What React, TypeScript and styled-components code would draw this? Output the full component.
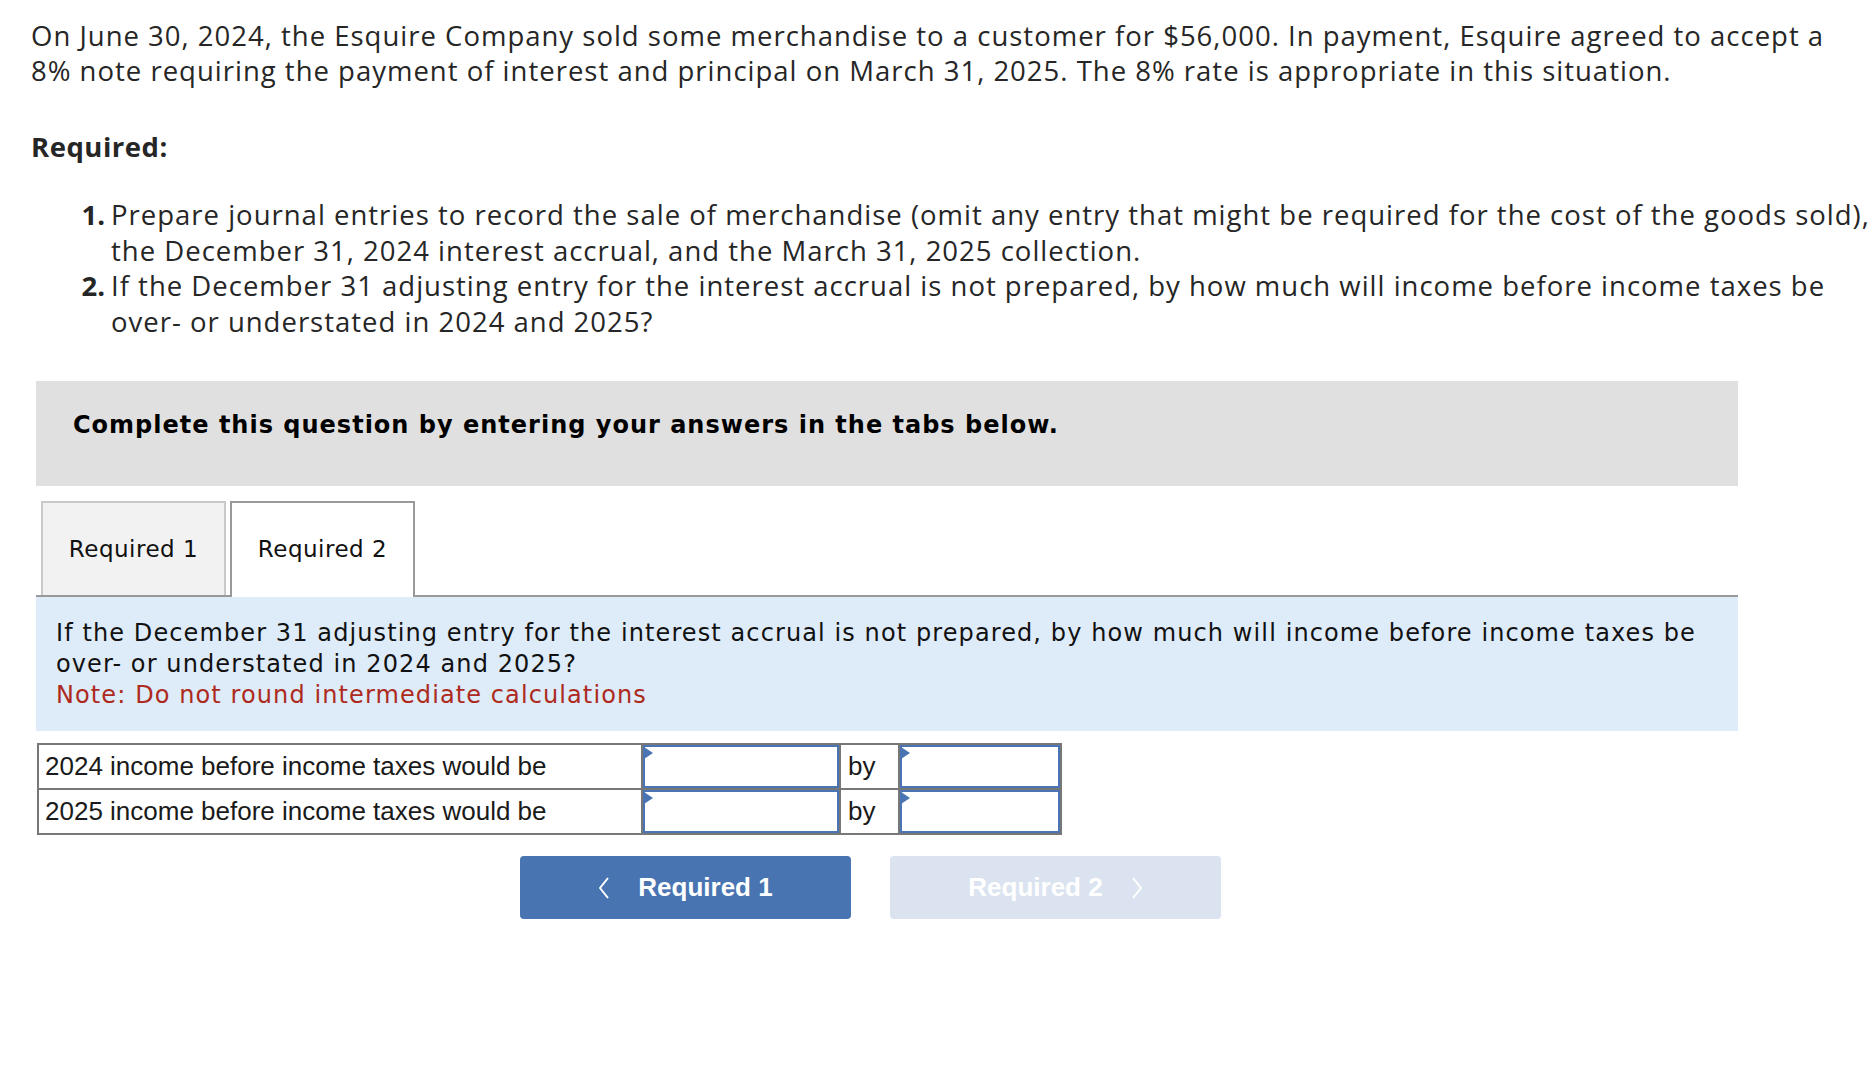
import type { FC } from 'react'
import { createGlobalStyle, styled } from 'styled-components'

const GlobalStyle = createGlobalStyle`
  html, body {
    margin: 0;
    padding: 0;
    background: #fff;
    overflow: hidden;
  }
`

const Page = styled.div`
  padding: 18px 0 40px 31px;
  font-family: 'Open Sans', Lato, sans-serif;
  color: #262626;
`

const Intro = styled.p`
  margin: 0;
  font-size: 27.5px;
  letter-spacing: 1px;
  line-height: 35px;
  white-space: nowrap;
`

const RequiredHeading = styled.h3`
  margin: 41px 0 0;
  font-size: 27.5px;
  letter-spacing: 0.5px;
  line-height: 35px;
  font-weight: 700;
`

const List = styled.ol`
  list-style: none;
  margin: 33px 0 0;
  padding: 0 0 0 40px;
  font-size: 27.5px;
  letter-spacing: 1px;
  line-height: 35.6px;
`

const ListItem = styled.li`
  display: grid;
  grid-template-columns: 34px 1fr;
  column-gap: 6px;
  white-space: nowrap;
`

const Num = styled.span`
  text-align: right;
  font-weight: 700;
  letter-spacing: 0;
`

const Question = styled.section`
  width: 1702px;
  margin: 42px 0 0 5px;
`

const Instructions = styled.div`
  box-sizing: border-box;
  height: 105px;
  padding: 30px 0 0 37px;
  background: #e0e0e0;
  color: #000;
  font-family: Verdana, 'DejaVu Sans', sans-serif;
  font-size: 24px;
  letter-spacing: 1px;
  line-height: 28px;
  font-weight: 700;
`

const TabStrip = styled.div`
  display: flex;
  align-items: flex-end;
  gap: 4px;
  margin-top: 15px;
  padding-left: 5px;
  border-bottom: 2px solid #999;
`

const Tab = styled.div<{ $active?: boolean }>`
  box-sizing: border-box;
  width: 185px;
  height: ${(p) => (p.$active ? 96 : 94)}px;
  margin-bottom: ${(p) => (p.$active ? -2 : 0)}px;
  display: flex;
  align-items: center;
  justify-content: center;
  padding-bottom: ${(p) => (p.$active ? 2 : 0)}px;
  border: 2px solid ${(p) => (p.$active ? '#999' : '#c9c9c9')};
  border-bottom: none;
  background: ${(p) => (p.$active ? '#fff' : '#f2f2f2')};
  color: #111;
  font-family: Verdana, 'DejaVu Sans', sans-serif;
  font-size: 23px;
  letter-spacing: 0.5px;
`

const Panel = styled.div`
  padding: 21px 20px 20px;
  background: #deebf8;
  color: #111;
  font-family: Verdana, 'DejaVu Sans', sans-serif;
  font-size: 24px;
  letter-spacing: 1.1px;
  line-height: 31px;
  white-space: nowrap;
`

const Note = styled.div`
  color: #ad2a21;
`

const AnswerTable = styled.table`
  margin: 12px 0 0 1px;
  border-collapse: collapse;
  border: 2px solid #777;
  font-family: 'Liberation Sans', Arial, sans-serif;
  font-size: 26px;
  color: #1a1a1a;
`

const Cell = styled.td<{ $width: number; $pad: number }>`
  box-sizing: border-box;
  width: ${(p) => p.$width}px;
  height: 43px;
  padding: 0 0 0 ${(p) => p.$pad}px;
  border: 2px solid #777;
  white-space: nowrap;
`

const InputCell = styled.td<{ $width: number }>`
  box-sizing: border-box;
  position: relative;
  width: ${(p) => p.$width}px;
  height: 43px;
  padding: 0;
  border: 2px solid #777;
`

const AmountInput = styled.input`
  display: block;
  box-sizing: border-box;
  width: 100%;
  height: 43px;
  margin: 0;
  border: 2px solid #4a74b4;
  background: #fff;
  font: inherit;
  outline: none;
`

const Flag = styled.span`
  position: absolute;
  top: 2px;
  left: 1px;
  width: 0;
  height: 0;
  border-top: 6px solid transparent;
  border-bottom: 6px solid transparent;
  border-left: 9px solid #4a74b4;
`

const ButtonRow = styled.div`
  display: flex;
  gap: 39px;
  margin-top: 21px;
  padding-left: 484px;
`

const NavButton = styled.button<{ $disabled?: boolean }>`
  box-sizing: border-box;
  width: 331px;
  height: 63px;
  display: flex;
  align-items: center;
  justify-content: center;
  gap: 28px;
  border: none;
  border-radius: 4px;
  background: ${(p) => (p.$disabled ? '#dae3ef' : '#4974b2')};
  color: #fff;
  font-family: 'Liberation Sans', Arial, sans-serif;
  font-size: 26px;
  font-weight: 700;
  cursor: ${(p) => (p.$disabled ? 'default' : 'pointer')};
`

const Chevron: FC<{ dir: 'left' | 'right' }> = ({ dir }) => (
  <svg width="12" height="24" viewBox="0 0 12 24" fill="none">
    <polyline
      points={dir === 'left' ? '10,2 2,12 10,22' : '2,2 10,12 2,22'}
      stroke="#fff"
      strokeWidth="2"
      strokeLinejoin="round"
    />
  </svg>
)

const rows = ['2024', '2025']

const App: FC = () => {
  return (
    <>
      <GlobalStyle />
      <Page>
        <Intro>
          On June 30, 2024, the Esquire Company sold some merchandise to a customer for $56,000. In
          payment, Esquire agreed to accept a
          <br />
          8% note requiring the payment of interest and principal on March 31, 2025. The 8% rate is
          appropriate in this situation.
        </Intro>

        <RequiredHeading>Required:</RequiredHeading>

        <List>
          <ListItem>
            <Num>1.</Num>
            <span>
              Prepare journal entries to record the sale of merchandise (omit any entry that might be
              required for the cost of the goods sold),
              <br />
              the December 31, 2024 interest accrual, and the March 31, 2025 collection.
            </span>
          </ListItem>
          <ListItem>
            <Num>2.</Num>
            <span>
              If the December 31 adjusting entry for the interest accrual is not prepared, by how much
              will income before income taxes be
              <br />
              over- or understated in 2024 and 2025?
            </span>
          </ListItem>
        </List>

        <Question>
          <Instructions>Complete this question by entering your answers in the tabs below.</Instructions>

          <TabStrip>
            <Tab>Required 1</Tab>
            <Tab $active>Required 2</Tab>
          </TabStrip>

          <Panel>
            If the December 31 adjusting entry for the interest accrual is not prepared, by how much will
            income before income taxes be
            <br />
            over- or understated in 2024 and 2025?
            <Note>Note: Do not round intermediate calculations</Note>
          </Panel>

          <AnswerTable>
            <tbody>
              {rows.map((year) => (
                <tr key={year}>
                  <Cell $width={604} $pad={6}>
                    {year} income before income taxes would be
                  </Cell>
                  <InputCell $width={198}>
                    <AmountInput aria-label={`${year} over or under`} />
                    <Flag />
                  </InputCell>
                  <Cell $width={59} $pad={7}>
                    by
                  </Cell>
                  <InputCell $width={162}>
                    <AmountInput aria-label={`${year} amount`} />
                    <Flag />
                  </InputCell>
                </tr>
              ))}
            </tbody>
          </AnswerTable>

          <ButtonRow>
            <NavButton>
              <Chevron dir="left" />
              Required 1
            </NavButton>
            <NavButton $disabled>
              Required 2
              <Chevron dir="right" />
            </NavButton>
          </ButtonRow>
        </Question>
      </Page>
    </>
  )
}

export default App
